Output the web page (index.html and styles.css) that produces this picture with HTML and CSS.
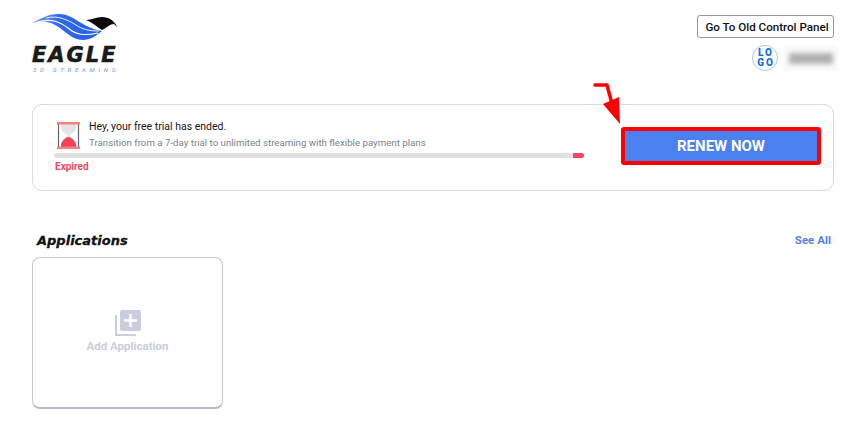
FILE: index.html
```html
<!DOCTYPE html>
<html lang="en">
<head>
    <meta charset="UTF-8">
    <title>Eagle 3D Streaming</title>
    <link rel="stylesheet" href="styles.css">
</head>
<body>

<div class="container">
    <header class="header">
        <div class="brand">
            <svg class="brand-mark" width="86" height="32" viewBox="0 0 86 32">
                <defs>
                    <linearGradient id="wing" x1="0" y1="0" x2="1" y2="0">
                        <stop offset="0" stop-color="#6f9ff5"/>
                        <stop offset="0.4" stop-color="#2f68ea"/>
                        <stop offset="1" stop-color="#2a5fe4"/>
                    </linearGradient>
                </defs>
                <path d="M0 9C10 4 16 0 27 0C42 0 50 14 70 17C64 22 58 26 51 26C36 26 30 10 14 8C9 7 4 8 0 9Z" fill="url(#wing)"/>
                <path d="M5 8C20 4 28 8 36 14C44 21 52 22 66 19" fill="none" stroke="#fff" stroke-width="1.100"/>
                <path d="M14 4C26 1 36 6 44 11C50 15 56 17 67 17" fill="none" stroke="#fff" stroke-width="0.900"/>
                <path d="M54 6C60 6 64 3 70 3C77 3 83 7 85 13L82 10C78 10 76 13 70 16C65 13 60 8 54 6Z" fill="#0a0a0a"/>
            </svg>
            <div class="brand-name">EAGLE</div>
            <div class="brand-sub">3D STREAMING</div>
        </div>
        <div class="account">
            <button class="old-panel">Go To Old Control Panel</button>
            <div class="user">
                <div class="avatar"><span>LO</span><span>GO</span></div>
                <div class="user-name"><div class="user-blur"></div></div>
            </div>
        </div>
    </header>

    <section class="trial">
        <div class="trial-info">
            <div class="trial-top">
                <svg class="hourglass" width="23" height="27" viewBox="0 0 23 27">
                    <path d="M4 2H19V6C19 10 13 12 12.500 13.500C13 15 19 17 19 21V25H4V21C4 17 10 15 10.500 13.500C10 12 4 10 4 6Z" fill="#e4e4e6"/>
                    <path d="M1.500 2V25M21.500 2V25" fill="none" stroke="#5d6470" stroke-width="1.200"/>
                    <path d="M4 25V22C6 18 9 15 11.500 15C14 15 17 18 19 22V25Z" fill="#f0435a"/>
                    <rect x="0" y="0" width="23" height="2.500" fill="#fb7f7a"/>
                    <rect x="0" y="24.500" width="23" height="2.500" fill="#fb7f7a"/>
                </svg>
                <div class="trial-text">
                    <div class="trial-title">Hey, your free trial has ended.</div>
                    <div class="trial-desc">Transition from a 7-day trial to unlimited streaming with flexible payment plans</div>
                </div>
            </div>
            <div class="progress"><div class="progress-fill"></div></div>
            <div class="expired">Expired</div>
        </div>
        <button class="renew">RENEW NOW</button>
        <svg class="arrow" width="30" height="46" viewBox="0 0 30 46">
            <path d="M2 2H14L18 17" fill="none" stroke="#f00" stroke-width="3.500" stroke-linecap="round" stroke-linejoin="round"/>
            <path d="M10 21L26 14L27 41Z" fill="#f00"/>
        </svg>
    </section>

    <div class="section-head">
        <h2 class="section-title">Applications</h2>
        <a class="see-all">See All</a>
    </div>

    <div class="app-card">
        <svg class="app-icon" width="26" height="26" viewBox="0 0 26 26">
            <path d="M1 5V25H21" fill="none" stroke="#c8cde0" stroke-width="2"/>
            <rect x="5" y="0" width="21" height="21" rx="2" fill="#c8cde0"/>
            <path d="M15.500 4V17M9 10.500H22" stroke="#fff" stroke-width="2.600"/>
        </svg>
        <div class="app-label">Add Application</div>
    </div>
</div>

</body>
</html>
```

FILE: styles.css
```css
* {
    box-sizing: border-box;
}

body, html {
    margin: 0;
    background-color: white;
    font-family: Roboto, sans-serif;
    overflow: hidden;
}

.container {
    width: 857px;
    height: 426px;
    padding: 0 23px 0 32px;
}

.header {
    display: flex;
    justify-content: space-between;
    height: 104px;
    padding-top: 14px;
}

.brand {
    display: flex;
    flex-direction: column;
    width: 90px;
}

.brand-mark {
    display: block;
}

.brand-name {
    font-family: "DejaVu Sans", sans-serif;
    font-size: 21px;
    font-weight: bold;
    font-style: italic;
    line-height: 18px;
    letter-spacing: 2px;
    color: #1b1b1d;
    -webkit-text-stroke: 0.6px #1b1b1d;
}

.brand-sub {
    margin-top: 2px;
    margin-left: 1px;
    font-size: 6px;
    font-style: italic;
    line-height: 7px;
    letter-spacing: 3.800px;
    color: #6f95f0;
    white-space: nowrap;
}

.account {
    display: flex;
    flex-direction: column;
    align-items: flex-end;
    padding-top: 1px;
}

.old-panel {
    width: 137px;
    height: 23px;
    padding: 0 0 0 3px;
    background: white;
    border: 1px solid #999;
    border-radius: 3px;
    font-family: inherit;
    font-size: 11.600px;
    font-weight: 500;
    color: #111;
}

.user {
    display: flex;
    align-items: center;
    gap: 6px;
    margin-top: 7px;
    margin-right: -4px;
}

.avatar {
    display: flex;
    flex-direction: column;
    align-items: center;
    justify-content: center;
    width: 26px;
    height: 26px;
    padding-left: 2px;
    border: 1px solid #a9c4f7;
    border-radius: 50%;
    font-size: 10px;
    font-weight: 900;
    line-height: 10px;
    letter-spacing: 2px;
    color: #1470e8;
}

.user-name {
    display: flex;
    align-items: center;
    justify-content: center;
    width: 54px;
    height: 26px;
    background-color: #fafafa;
}

.user-blur {
    width: 44px;
    height: 11px;
    background-color: #b0b0b0;
    filter: blur(2.500px);
}

.trial {
    position: relative;
    display: flex;
    align-items: center;
    justify-content: space-between;
    height: 87px;
    padding: 0 12px 3px 21px;
    border: 1px solid #d8d8e6;
    border-radius: 10px;
}

.trial-info {
    width: 530px;
}

.trial-top {
    display: flex;
    align-items: center;
    gap: 9px;
    padding-left: 3px;
}

.hourglass {
    flex-shrink: 0;
}

.trial-title {
    font-size: 10.500px;
    line-height: 16px;
    color: #15151a;
}

.trial-desc {
    font-size: 9.700px;
    line-height: 16px;
    color: #7b7f8a;
    white-space: nowrap;
}

.progress {
    display: flex;
    justify-content: flex-end;
    height: 5px;
    margin-top: 2px;
    background-color: #e0e0e0;
    border-radius: 3px;
}

.progress-fill {
    width: 11px;
    background-color: #f4475f;
    border-radius: 0 3px 3px 0;
}

.expired {
    margin-top: 2px;
    padding-left: 1px;
    font-size: 10px;
    font-weight: 700;
    line-height: 13px;
    color: #f4475f;
}

.renew {
    width: 200px;
    height: 38px;
    background-color: #4a80f0;
    border: 4px solid #f00;
    border-radius: 3px;
    font-family: inherit;
    font-size: 15px;
    font-weight: 700;
    color: white;
}

.arrow {
    position: absolute;
    top: -22px;
    left: 560px;
}

.section-head {
    display: flex;
    align-items: center;
    justify-content: space-between;
    height: 24px;
    margin-top: 37px;
    padding-left: 5px;
    padding-right: 3px;
}

.section-title {
    margin: 0;
    font-family: "DejaVu Sans", sans-serif;
    font-size: 13px;
    font-weight: bold;
    font-style: italic;
    color: #111;
    -webkit-text-stroke: 0.3px #111;
}

.see-all {
    font-size: 11.500px;
    font-weight: 700;
    color: #5580f2;
}

.app-card {
    display: flex;
    flex-direction: column;
    align-items: center;
    justify-content: center;
    gap: 3px;
    width: 191px;
    height: 152px;
    margin-top: 5px;
    padding-bottom: 3px;
    border: 1px solid #c4c6da;
    border-bottom: 2px solid #b6b8c6;
    border-radius: 8px;
}

.app-label {
    font-size: 11.500px;
    font-weight: 700;
    color: #c8cde0;
}
```
